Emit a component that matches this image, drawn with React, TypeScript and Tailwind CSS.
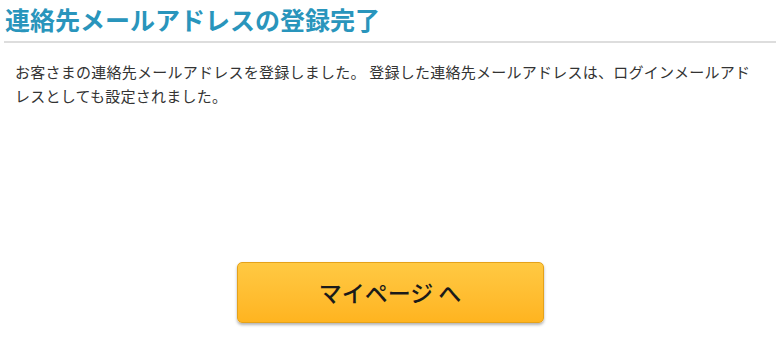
export default function App() {
  return (
    <div className="min-h-[349px] w-[780px] bg-white font-['Noto_Sans_CJK_JP',sans-serif]">
      <div className="px-[4px] pt-[2px]">
        <h1 className="border-b-2 border-[#dddddd] pb-[5px] pl-[1px] text-[25px] font-bold leading-[34px] text-[#2995bc]">
          連絡先メールアドレスの登録完了
        </h1>
      </div>
      <p className="px-[15px] pt-[17px] text-[15px] leading-[24px] tracking-[0.25px] text-[#333333]">
        お客さまの連絡先メールアドレスを登録しました。 登録した連絡先メールアドレスは、ログインメールアドレスとしても設定されました。
      </p>
      <div className="flex justify-center pt-[154px]">
        <button
          type="button"
          className="flex h-[61px] w-[307px] items-center justify-center rounded-[5px] border border-[#e5a21a] bg-gradient-to-b from-[#ffc942] to-[#ffb41f] text-[23px] font-medium text-[#1a1a1a] shadow-[0_2px_3px_rgba(0,0,0,0.3)]"
        >
          マイページ へ
        </button>
      </div>
    </div>
  );
}
